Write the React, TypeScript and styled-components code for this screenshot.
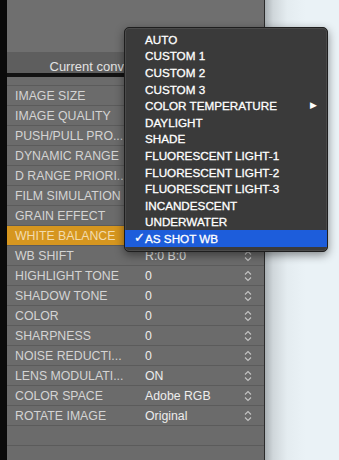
import React from 'react'
import styled, { createGlobalStyle } from 'styled-components'

const Global = createGlobalStyle`
  html, body {
    margin: 0;
    padding: 0;
    width: 339px;
    height: 460px;
    overflow: hidden;
    background: #000;
  }
  * { box-sizing: border-box; }
`

const Page = styled.div`
  position: relative;
  display: flex;
  width: 339px;
  height: 460px;
  font-family: 'Liberation Sans', Arial, Helvetica, sans-serif;
  overflow: hidden;
`

const Strip = styled.div`
  width: 7px;
  flex: none;
  background: #0a0a0a;
`

const Panel = styled.div`
  width: 258px;
  flex: none;
  display: flex;
  flex-direction: column;
  background: #6b6b6b;
  border-right: 1px solid #2b2b2b;
  & > * {
    flex: none;
  }
`

const TopArea = styled.div`
  height: 52px;
  background: #6f6f6f;
`

const ConvBar = styled.div`
  height: 21px;
  display: flex;
  align-items: flex-end;
  justify-content: center;
  padding-bottom: 0;
  line-height: 13px;
  background: #5e5e5e;
  color: #e2e2e2;
  font-size: 13px;
  white-space: nowrap;
`

const Divider = styled.div`
  height: 4px;
  background: #121212;
`

const Rows = styled.div`
  padding-top: 8px;
  display: flex;
  flex-direction: column;
`

const Row = styled.div`
  height: 20px;
  flex: none;
  display: grid;
  grid-template-columns: 117px 1fr 20px;
  align-items: center;
  border-top: 1px solid #5b5b5b;
  font-size: 12.3px;
`

const Label = styled.div<{ $active?: boolean }>`
  height: 100%;
  display: flex;
  align-items: center;
  padding-left: 8px;
  white-space: nowrap;
  background: ${(p) => (p.$active ? '#d6961f' : 'transparent')};
  color: ${(p) => (p.$active ? '#f3dcae' : '#d4d4d4')};
`

const Value = styled.div`
  padding-left: 21px;
  color: #ededed;
  white-space: nowrap;
`

const Stepper = styled.div`
  display: flex;
  align-items: center;
`

const Desk = styled.div`
  flex: 1;
  background: linear-gradient(90deg, #a9b0b4 0px, #cfd6da 8px, #e4ecf0 22px, #eaf2f6 40px);
`

const Menu = styled.div`
  position: absolute;
  left: 124px;
  top: 27px;
  width: 204px;
  padding: 3px 0 4px;
  background: #3a3a3a;
  border: 1px solid #1e1e1e;
  border-radius: 5px;
  box-shadow: 0 3px 10px rgba(0, 0, 0, 0.45), inset 0 0 0 1px #4a4a4a;
`

const Item = styled.div<{ $selected?: boolean }>`
  position: relative;
  height: 16.6px;
  display: flex;
  align-items: center;
  padding-left: 20px;
  font-size: 11.7px;
  color: #fff;
  white-space: nowrap;
  background: ${(p) => (p.$selected ? '#1d5ddb' : 'transparent')};
  -webkit-text-stroke: 0.3px #fff;
`

const Check = styled.span`
  position: absolute;
  left: 9px;
  top: 0;
  line-height: 16.6px;
  font-size: 13px;
`

const Arrow = styled.span`
  position: absolute;
  right: 10px;
  top: 0;
  line-height: 16.6px;
  font-size: 9px;
  -webkit-text-stroke: 0;
`

const Chevrons = () => (
  <svg width="8" height="12" viewBox="0 0 8 12">
    <path d="M1 4.5 L4 1.5 L7 4.5 M1 7.5 L4 10.5 L7 7.5" fill="none" stroke="#c4c4c4" strokeWidth="1.1" />
  </svg>
)

const rows: [string, string][] = [
  ['IMAGE SIZE', ''],
  ['IMAGE QUALITY', ''],
  ['PUSH/PULL PRO...', ''],
  ['DYNAMIC RANGE', ''],
  ['D RANGE PRIORI...', ''],
  ['FILM SIMULATION', ''],
  ['GRAIN EFFECT', ''],
  ['WHITE BALANCE', ''],
  ['WB SHIFT', 'R:0 B:0'],
  ['HIGHLIGHT TONE', '0'],
  ['SHADOW TONE', '0'],
  ['COLOR', '0'],
  ['SHARPNESS', '0'],
  ['NOISE REDUCTI...', '0'],
  ['LENS MODULATI...', 'ON'],
  ['COLOR SPACE', 'Adobe RGB'],
  ['ROTATE IMAGE', 'Original'],
  ['', ''],
  ['', ''],
]

const items = [
  'AUTO',
  'CUSTOM 1',
  'CUSTOM 2',
  'CUSTOM 3',
  'COLOR TEMPERATURE',
  'DAYLIGHT',
  'SHADE',
  'FLUORESCENT LIGHT-1',
  'FLUORESCENT LIGHT-2',
  'FLUORESCENT LIGHT-3',
  'INCANDESCENT',
  'UNDERWATER',
  'AS SHOT WB',
]

export default function App() {
  return (
    <>
      <Global />
      <Page>
        <Strip />
        <Panel>
          <TopArea />
          <ConvBar>Current conversion conditions</ConvBar>
          <Divider />
          <Rows>
            {rows.map(([label, value], i) => (
              <Row key={i}>
                <Label $active={label === 'WHITE BALANCE'}>{label}</Label>
                <Value>{value}</Value>
                <Stepper>{label && <Chevrons />}</Stepper>
              </Row>
            ))}
          </Rows>
        </Panel>
        <Desk />
        <Menu>
          {items.map((it) => (
            <Item key={it} $selected={it === 'AS SHOT WB'}>
              {it === 'AS SHOT WB' && <Check>✓</Check>}
              {it}
              {it === 'COLOR TEMPERATURE' && <Arrow>▶</Arrow>}
            </Item>
          ))}
        </Menu>
      </Page>
    </>
  )
}
